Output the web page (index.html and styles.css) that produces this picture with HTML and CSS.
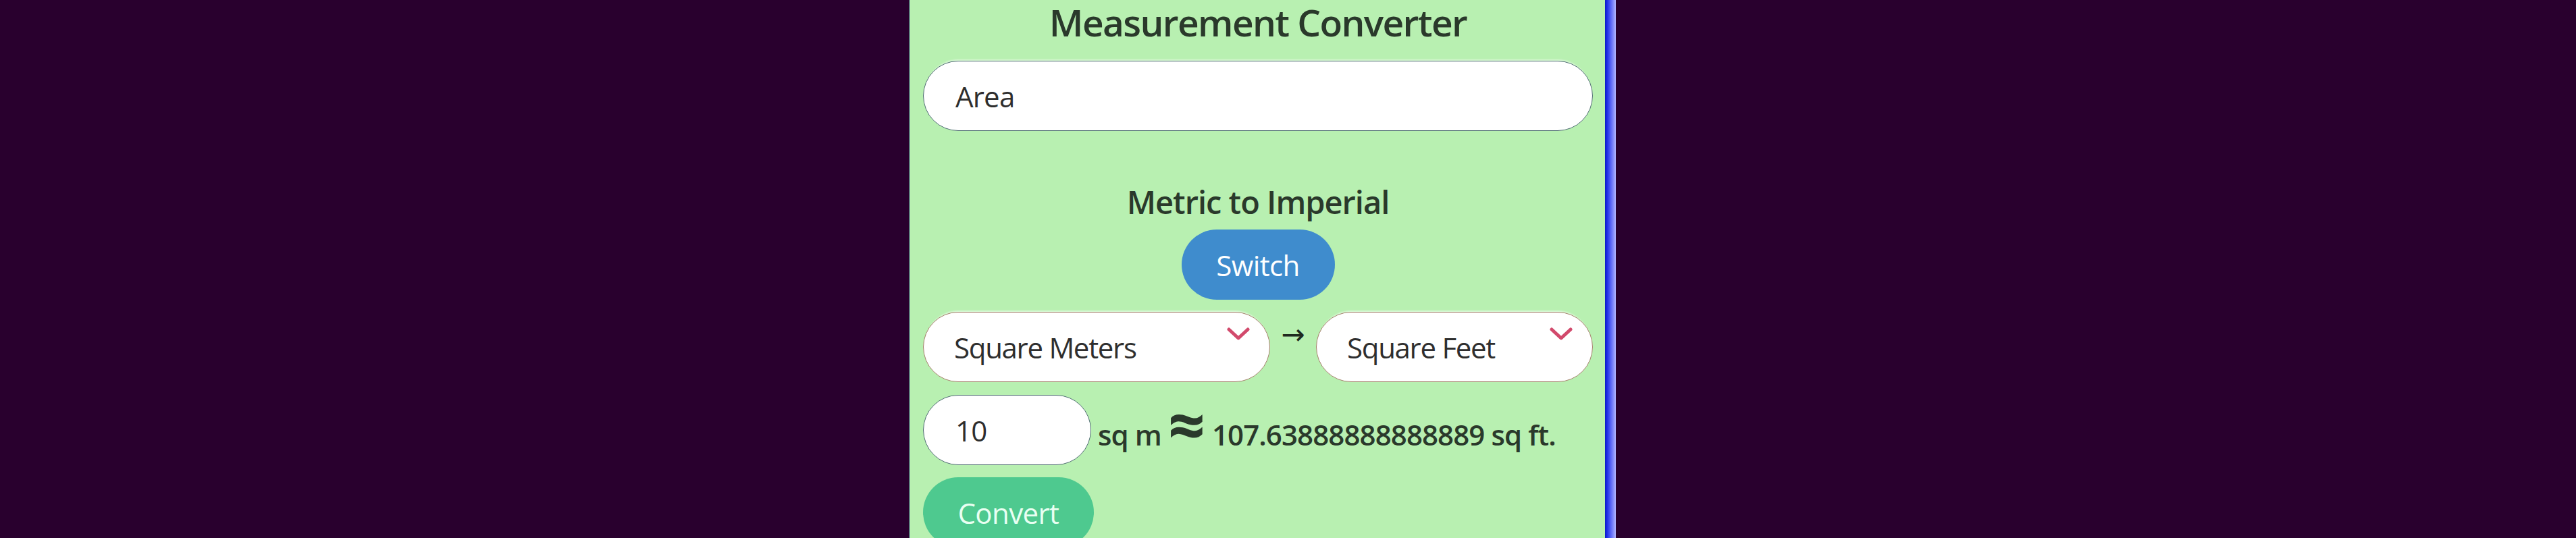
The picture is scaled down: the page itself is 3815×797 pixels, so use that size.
FILE: index.html
```html
<!DOCTYPE html>
<html lang="en">
<head>
<meta charset="utf-8">
<title>Measurement Converter</title>
<link rel="stylesheet" href="styles.css">
</head>
<body>
<div class="page">
  <main class="panel">
    <h1 class="title">Measurement Converter</h1>
    <input class="field category" type="text" value="Area">
    <h2 class="direction">Metric to Imperial</h2>
    <button class="btn switch" type="button">Switch</button>
    <div class="units">
      <div class="select-wrap from">
        <select class="unit-select">
          <option>Square Meters</option>
        </select>
        <svg class="chevron" viewBox="0 0 34 20" aria-hidden="true"><path d="M3 3 L17 16 L31 3" fill="none" stroke="#d24a6c" stroke-width="5" stroke-linecap="round" stroke-linejoin="round"/></svg>
      </div>
      <span class="arrow">→</span>
      <div class="select-wrap to">
        <select class="unit-select">
          <option>Square Feet</option>
        </select>
        <svg class="chevron" viewBox="0 0 34 20" aria-hidden="true"><path d="M3 3 L17 16 L31 3" fill="none" stroke="#d24a6c" stroke-width="5" stroke-linecap="round" stroke-linejoin="round"/></svg>
      </div>
    </div>
    <div class="result-row">
      <input class="field amount" type="text" value="10">
      <p class="result">sq m <span class="approx">≈</span> 107.63888888888889 sq ft.</p>
    </div>
    <button class="btn convert" type="button">Convert</button>
  </main>
</div>
</body>
</html>
```

FILE: styles.css
```css
html, body {
  margin: 0;
  padding: 0;
  height: 100%;
  overflow: hidden;
}
body {
  background: #29002e;
  font-family: "Open Sans", "Noto Sans", sans-serif;
  color: #2c3a2c;
}
.page {
  display: flex;
  justify-content: center;
  align-items: flex-start;
  padding-right: 76px;
  height: 100%;
}
.panel {
  width: 992px;
  height: 100%;
  box-sizing: content-box;
  padding: 0 18px 0 20px;
  border-left: 1px solid #1d2c5c;
  border-right: 16px solid transparent;
  background:
    linear-gradient(90deg, #0b18c8 0, #1f2ee6 20%, #4a57f4 45%, #8088fb 75%, #b4b8ff 100%) right top / 16px 100% no-repeat,
    linear-gradient(#b8f0b1, #b8f0b1);
  background-origin: border-box, padding-box;
  background-clip: border-box, padding-box;
  display: flex;
  flex-direction: column;
  align-items: stretch;
  overflow: hidden;
}
.panel > * {
  flex-shrink: 0;
}
.title {
  margin: 0;
  font-size: 55px;
  font-weight: 600;
  line-height: 66px;
  text-align: center;
  letter-spacing: -1.6px;
  color: #2a392b;
}
.field {
  box-sizing: border-box;
  height: 104px;
  border-radius: 52px;
  border: 1.5px solid #4f6d72;
  background: #fff;
  font-family: "Open Sans", "Noto Sans", sans-serif;
  font-size: 42px;
  color: #2e2e2e;
  padding: 0 0 0 47px;
  outline: none;
  letter-spacing: -0.8px;
}
.category {
  margin-top: 24px;
  width: 100%;
  box-shadow: 0 -6px 2px -4px rgba(255,255,255,0.45);
}
.direction {
  margin: 76px 0 0;
  font-size: 47px;
  font-weight: 600;
  line-height: 58px;
  text-align: center;
  letter-spacing: -1px;
  color: #2a392b;
}
.btn {
  height: 104px;
  border: none;
  border-radius: 52px;
  font-family: "Open Sans", "Noto Sans", sans-serif;
  font-size: 42px;
  letter-spacing: -0.6px;
  padding: 0;
}
.switch {
  align-self: center;
  margin-top: 12px;
  width: 227px;
  background: #3f8ccd;
  color: #fff;
}
.units {
  margin-top: 18px;
  display: flex;
  align-items: center;
}
.select-wrap {
  position: relative;
  height: 104px;
  flex-shrink: 0;
}
.select-wrap.from { width: 514px; }
.select-wrap.to { width: 410px; }
.unit-select {
  -webkit-appearance: none;
  appearance: none;
  box-sizing: border-box;
  width: 100%;
  height: 100%;
  border-radius: 52px;
  border: 1.5px solid #a4806a;
  background: #fff;
  font-family: "Open Sans", "Noto Sans", sans-serif;
  font-size: 42px;
  color: #2e2e2e;
  padding: 0 0 0 45px;
  outline: none;
  letter-spacing: -1.3px;
  box-shadow: 0 -6px 2px -4px rgba(255,255,255,0.45);
}
.chevron {
  position: absolute;
  top: 23px;
  right: 30px;
  width: 34px;
  height: 20px;
  pointer-events: none;
}
.arrow {
  width: 68px;
  flex-shrink: 0;
  text-align: center;
  font-family: "DejaVu Sans", sans-serif;
  font-size: 42px;
  line-height: 1;
  color: #1f2a1f;
  margin-top: -36px;
}
.result-row {
  margin-top: 19px;
  display: flex;
  align-items: flex-start;
}
.amount {
  width: 249px;
  flex-shrink: 0;
}
.result {
  margin: 34px 0 0 10px;
  font-size: 42px;
  font-weight: 600;
  line-height: 50px;
  letter-spacing: -0.9px;
  white-space: nowrap;
  color: #2a392b;
}
.approx {
  font-size: 96px;
  font-weight: 700;
  line-height: 0;
  letter-spacing: 0;
  vertical-align: -5px;
}
.convert {
  align-self: flex-start;
  margin-top: 18px;
  width: 253px;
  background: #4ec98f;
  color: #e9fff2;
}
```
